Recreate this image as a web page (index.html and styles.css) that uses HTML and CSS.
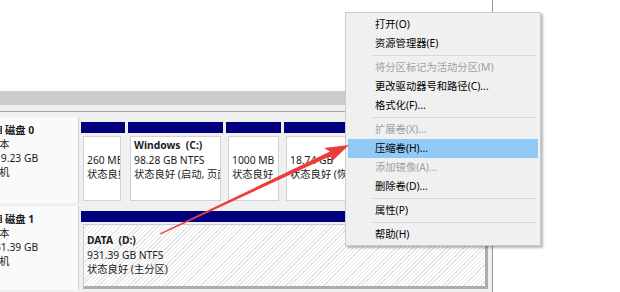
FILE: index.html
```html
<!DOCTYPE html>
<html lang="zh-CN">
<head>
<meta charset="utf-8">
<title>磁盘管理</title>
<link rel="stylesheet" href="styles.css">
</head>
<body>
<div class="window">
  <div class="upper"></div>
  <div class="hscroll"></div>
  <div class="splitter"></div>
  <div class="lower">
    <div class="disk disk0">
      <div class="label">
        <div class="label-inner">
          <div class="name"><svg class="disk-icon" width="14" height="12" viewBox="0 0 14 12"><rect x="0.5" y="2.5" width="12" height="7" fill="#bdbdbd" stroke="#3a3a3a"/><line x1="3" y1="6" x2="9" y2="6" stroke="#3a3a3a"/><line x1="11" y1="4" x2="11" y2="8" stroke="#3a3a3a"/></svg><span>磁盘 0</span></div>
          <div>基本</div>
          <div>119.23 GB</div>
          <div>联机</div>
        </div>
      </div>
      <div class="parts">
        <div class="part p1"><div class="bar"></div><div class="box"><div>&nbsp;</div><div>260 MB</div><div>状态良好 (EFI 系统分区)</div></div></div>
        <div class="part p2"><div class="bar"></div><div class="box"><div class="vname">Windows  (C:)</div><div>98.28 GB NTFS</div><div>状态良好 (启动, 页面文件, 故障转储, 主分区)</div></div></div>
        <div class="part p3"><div class="bar"></div><div class="box"><div>&nbsp;</div><div>1000 MB</div><div>状态良好</div></div></div>
        <div class="part p4"><div class="bar"></div><div class="box"><div>&nbsp;</div><div>18.74 GB</div><div>状态良好 (恢复分区)</div></div></div>
      </div>
    </div>
    <div class="disk disk1">
      <div class="label">
        <div class="label-inner">
          <div class="name"><svg class="disk-icon" width="14" height="12" viewBox="0 0 14 12"><rect x="0.5" y="2.5" width="12" height="7" fill="#bdbdbd" stroke="#3a3a3a"/><line x1="3" y1="6" x2="9" y2="6" stroke="#3a3a3a"/><line x1="11" y1="4" x2="11" y2="8" stroke="#3a3a3a"/></svg><span>磁盘 1</span></div>
          <div>基本</div>
          <div>931.39 GB</div>
          <div>联机</div>
        </div>
      </div>
      <div class="parts">
        <div class="part pd"><div class="bar"></div><div class="box selected"><div class="vname">DATA  (D:)</div><div>931.39 GB NTFS</div><div>状态良好 (主分区)</div></div></div>
      </div>
    </div>
  </div>
</div>

<div class="menu">
  <div class="item">打开(O)</div>
  <div class="item">资源管理器(E)</div>
  <div class="sep"></div>
  <div class="item disabled">将分区标记为活动分区(M)</div>
  <div class="item">更改驱动器号和路径(C)...</div>
  <div class="item">格式化(F)...</div>
  <div class="sep"></div>
  <div class="item disabled">扩展卷(X)...</div>
  <div class="item active">压缩卷(H)...</div>
  <div class="item disabled">添加镜像(A)...</div>
  <div class="item">删除卷(D)...</div>
  <div class="sep"></div>
  <div class="item">属性(P)</div>
  <div class="sep"></div>
  <div class="item">帮助(H)</div>
</div>

<svg class="arrow" width="620" height="292" viewBox="0 0 620 292">
  <polygon points="159.7,233.5 330.0,151.5 323.9,148.0 349,145 330.7,162.4 331.8,155.5 160.3,234.5" fill="#ec3b3b"/>
</svg>
</body>
</html>
```

FILE: styles.css
```css
* { box-sizing: border-box; }
html, body { margin: 0; padding: 0; }
body {
  width: 620px;
  height: 292px;
  overflow: hidden;
  position: relative;
  background: #ffffff;
  font-family: "Noto Sans", "Noto Sans CJK SC", sans-serif;
  font-size: 10.3px;
  color: #1b1b1b;
}

.window {
  width: 493px;
  height: 292px;
  border-right: 1px solid #999999;
  display: flex;
  flex-direction: column;
}
.upper { height: 91px; flex: none; background: #ffffff; }
.hscroll { height: 14px; flex: none; background: #cbcbcb; }
.splitter { height: 7px; flex: none; background: #f0f0f0; border-bottom: 1px solid #a3a3a3; }
.lower {
  flex: 1;
  background: #f0f0f0;
  padding-top: 5px;
  display: flex;
  flex-direction: column;
  gap: 3px;
}

.disk { display: flex; gap: 2px; flex: none; }
.disk0 { height: 86px; }
.disk1 { height: 84px; }

.label {
  width: 79px;
  flex: none;
  background: #fafafa;
  border-right: 1px solid #d3d3d3;
  overflow: hidden;
  padding-top: 6px;
  white-space: nowrap;
  line-height: 14px;
}
.label-inner { margin-left: -11px; }
.name { display: flex; align-items: center; gap: 2px; font-weight: bold; }
.disk-icon { flex: none; }

.parts {
  flex: 1;
  display: flex;
  gap: 3px;
  padding-top: 5px;
  padding-right: 4px;
}
.part { display: flex; flex-direction: column; }
.p1 { width: 44px; }
.p2 { width: 95px; }
.p3 { width: 55px; }
.p4, .pd { flex: 1; }
.bar { height: 11px; flex: none; background: #00007f; }
.box {
  flex: 1;
  margin: 3px 2px 2px 2px;
  background: #ffffff;
  border: 1px solid #d2d2d2;
  padding: 1px 3px 0 3px;
  overflow: hidden;
  white-space: pre;
  line-height: 14.5px;
}
.p1 .box { margin-right: 4px; }
.vname { font-weight: bold; }
.box.selected {
  margin: 2px 0 1px 2px;
  padding-top: 8px;
  border: 1px solid #cccccc;
  border-right: 3px solid #adadad;
  border-bottom: 3px solid #adadad;
  background: repeating-linear-gradient(135deg, #ffffff 0, #ffffff 2px, #e4e4e4 2px, #e4e4e4 3px);
}

.menu {
  position: absolute;
  left: 345px;
  top: 12px;
  width: 196px;
  background: #f0f0f0;
  border: 1px solid #cccccc;
  padding: 2px 2px 1px 2px;
  box-shadow: 2px 2px 2px rgba(0, 0, 0, 0.28);
  color: #000000;
}
.item { height: 19px; line-height: 19px; padding-left: 27px; white-space: nowrap; }
.item.disabled { color: #a0a0a0; }
.item.active { background: #91c9f7; }
.sep { height: 5px; display: flex; align-items: center; }
.sep::before {
  content: "";
  flex: 1;
  height: 1px;
  background: #dadada;
  margin-left: 24px;
  margin-right: 2px;
}

.arrow { position: absolute; left: 0; top: 0; pointer-events: none; }
```
